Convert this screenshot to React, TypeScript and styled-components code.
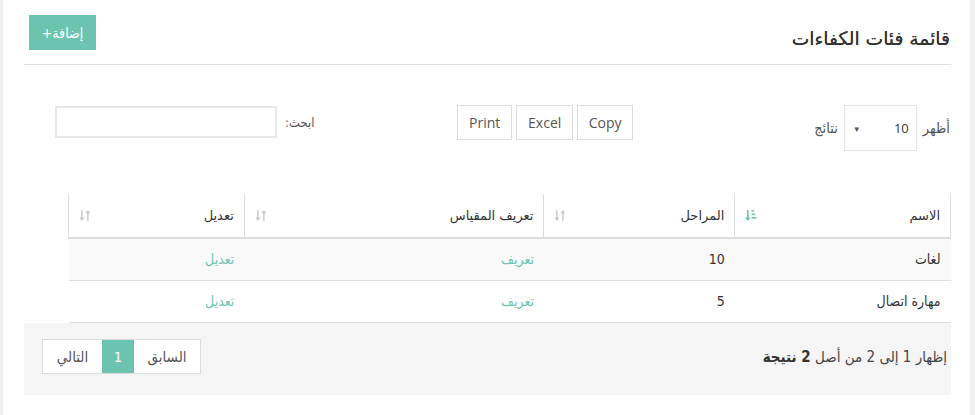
import React from "react";
import styled, { createGlobalStyle } from "styled-components";

const GlobalStyle = createGlobalStyle`
  html, body { margin: 0; padding: 0; }
  body {
    background: #f1f1f1;
    font-family: "Open Sans", "DejaVu Sans", sans-serif;
    color: #333;
  }
  * { box-sizing: border-box; }
`;

const TEAL = "#6cc4b0";
const LINK = "#6dc6b1";
const COND = `"DejaVu Sans Condensed", "DejaVu Sans", sans-serif`;

const Panel = styled.div`
  direction: rtl;
  background: #fff;
  margin: 0 5px 0 3px;
  min-height: 415px;
  padding: 0 19px 0 21px;
`;

const Header = styled.div`
  display: flex;
  justify-content: space-between;
  align-items: flex-start;
  height: 65px;
  border-bottom: 1px solid #dedede;
  padding-top: 15px;
`;

const Title = styled.h3`
  margin: 10px 1px 0 0;
  font-family: "DejaVu Sans", sans-serif;
  font-size: 18.7px;
  font-weight: normal;
  color: #333;
  line-height: 28px;
  text-shadow: 0 0 0.4px #333;
`;

const AddButton = styled.button`
  margin-left: 5px;
  height: 35px;
  width: 67px;
  border: none;
  background: ${TEAL};
  color: #fff;
  font-family: ${COND};
  font-size: 14px;
  padding: 0;
`;

const Controls = styled.div`
  display: flex;
  align-items: flex-start;
  margin-top: 40px;
  height: 46px;
`;

const LengthGroup = styled.label`
  display: flex;
  align-items: center;
  gap: 6px;
  font-family: ${COND};
  font-size: 14.5px;
  color: #555;
  height: 46px;
  margin-right: 1px;
`;

const SelectBox = styled.div`
  width: 73px;
  height: 46px;
  border: 1px solid #e3e3e3;
  display: flex;
  align-items: center;
  justify-content: space-between;
  padding: 0 7px 0 8px;
  font-family: "Open Sans", sans-serif;
  font-size: 13px;
  color: #333;
`;

const Caret = styled.span`
  font-size: 8px;
  color: #555;
`;

const ButtonGroup = styled.div`
  display: flex;
  gap: 4px;
  margin-right: 181px;
`;

const ExportButton = styled.button<{ $w: number }>`
  width: ${(p) => p.$w}px;
  height: 35px;
  border: 1px solid #dcdcdc;
  background: #fff;
  font-family: "Open Sans", sans-serif;
  font-size: 14px;
  color: #555;
  padding: 0;
`;

const SearchGroup = styled.label`
  margin-right: auto;
  margin-left: 31px;
  display: flex;
  align-items: center;
  gap: 8px;
  height: 34px;
  font-family: ${COND};
  font-size: 13px;
  color: #555;
`;

const SearchInput = styled.input`
  width: 222px;
  height: 32px;
  border: 2px solid #e8e8e8;
  outline: none;
`;

const Table = styled.table`
  margin-top: 43px;
  width: 883px;
  border-collapse: collapse;
  font-size: 13px;
`;

const Th = styled.th<{ $w: number }>`
  width: ${(p) => p.$w}px;
  height: 44px;
  border-left: 1px solid #dcdcdc;
  border-right: 1px solid #dcdcdc;
  border-bottom: 2px solid #dcdcdc;
  text-align: right;
  font-weight: normal;
  font-family: "DejaVu Sans", sans-serif;
  font-size: 13px;
  color: #333;
  padding: 0 10px;
`;

const ThInner = styled.div`
  display: flex;
  align-items: center;
  justify-content: space-between;
`;

const Tr = styled.tr<{ $odd?: boolean }>`
  background: ${(p) => (p.$odd ? "#f9f9f9" : "#fff")};
  border-bottom: 1px solid #dedede;
`;

const Td = styled.td<{ $link?: boolean }>`
  height: 42px;
  padding: 0 10px;
  text-align: right;
  font-family: ${COND};
  font-size: 14px;
  color: ${(p) => (p.$link ? LINK : "#333")};
`;

const Footer = styled.div`
  background: #f5f5f5;
  display: flex;
  align-items: center;
  justify-content: space-between;
  height: 72px;
  padding: 0 4px 4px 18px;
`;

const Info = styled.div`
  font-family: ${COND};
  font-size: 15px;
  color: #444;
  b { font-weight: bold; color: #333; }
`;

const Pager = styled.div`
  display: flex;
  height: 35px;
  border: 1px solid #dcdcdc;
  background: #fff;
`;

const PageBtn = styled.span<{ $w: number; $active?: boolean }>`
  width: ${(p) => p.$w}px;
  display: flex;
  align-items: center;
  justify-content: center;
  font-family: ${COND};
  font-size: ${(p) => (p.$active ? 14 : 15)}px;
  color: ${(p) => (p.$active ? "#fff" : "#555")};
  background: ${(p) => (p.$active ? TEAL : "transparent")};
`;

const SortIcon = ({ active }: { active?: boolean }) =>
  active ? (
    <svg width="12" height="13" viewBox="0 0 12 13">
      <g fill={TEAL}>
        <rect x="2" y="1" width="1.6" height="10" />
        <path d="M0 8.5 L5.6 8.5 L2.8 12 Z" />
        <rect x="6.5" y="1" width="2.5" height="1.6" />
        <rect x="6.5" y="4.5" width="3.5" height="1.6" />
        <rect x="6.5" y="8" width="5" height="1.6" />
      </g>
    </svg>
  ) : (
    <svg width="12" height="13" viewBox="0 0 12 13">
      <g fill="#c8c8c8">
        <rect x="2.2" y="1" width="1.4" height="9" />
        <path d="M0.4 8.5 L5.4 8.5 L2.9 12 Z" />
        <rect x="8.2" y="3" width="1.4" height="9" />
        <path d="M6.4 4.5 L11.4 4.5 L8.9 1 Z" />
      </g>
    </svg>
  );

const rows = [
  { name: "لغات", stages: "10" },
  { name: "مهارة اتصال", stages: "5" },
];

export default function App() {
  return (
    <>
      <GlobalStyle />
      <Panel>
        <Header>
          <Title>قائمة فئات الكفاءات</Title>
          <AddButton>إضافة+</AddButton>
        </Header>
        <Controls>
          <LengthGroup>
            <span>أظهر</span>
            <SelectBox>
              <span>10</span>
              <Caret>▼</Caret>
            </SelectBox>
            <span>نتائج</span>
          </LengthGroup>
          <ButtonGroup>
            <ExportButton $w={56}>Copy</ExportButton>
            <ExportButton $w={57}>Excel</ExportButton>
            <ExportButton $w={55}>Print</ExportButton>
          </ButtonGroup>
          <SearchGroup>
            <span>ابحث:</span>
            <SearchInput />
          </SearchGroup>
        </Controls>
        <Table>
          <thead>
            <tr>
              <Th $w={216}>
                <ThInner>
                  <span>الاسم</span>
                  <SortIcon active />
                </ThInner>
              </Th>
              <Th $w={191}>
                <ThInner>
                  <span>المراحل</span>
                  <SortIcon />
                </ThInner>
              </Th>
              <Th $w={300}>
                <ThInner>
                  <span>تعريف المقياس</span>
                  <SortIcon />
                </ThInner>
              </Th>
              <Th $w={176}>
                <ThInner>
                  <span>تعديل</span>
                  <SortIcon />
                </ThInner>
              </Th>
            </tr>
          </thead>
          <tbody>
            {rows.map((r, i) => (
              <Tr key={r.name} $odd={i % 2 === 0}>
                <Td>{r.name}</Td>
                <Td>{r.stages}</Td>
                <Td $link>تعريف</Td>
                <Td $link>تعديل</Td>
              </Tr>
            ))}
          </tbody>
        </Table>
        <Footer>
          <Info>
            إظهار 1 إلى 2 من أصل <b>2 نتيجة</b>
          </Info>
          <Pager>
            <PageBtn $w={66}>السابق</PageBtn>
            <PageBtn $w={32} $active>
              1
            </PageBtn>
            <PageBtn $w={59}>التالي</PageBtn>
          </Pager>
        </Footer>
      </Panel>
    </>
  );
}
